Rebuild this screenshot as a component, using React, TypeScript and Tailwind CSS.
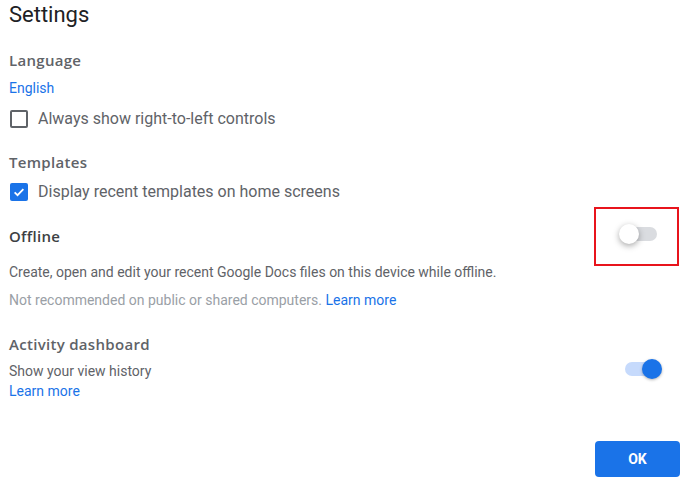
import React from 'react';

function Toggle({ on }: { on: boolean }) {
  return (
    <div className="relative w-[34px] h-[14px]">
      <div className={on ? 'w-full h-full rounded-full bg-[#c6dafc]' : 'w-full h-full rounded-full bg-[#dadce0]'} />
      <div
        className={
          on
            ? 'absolute top-[-3px] right-[-3px] w-[20px] h-[20px] rounded-full bg-[#1a73e8] shadow-[0_1px_3px_rgba(0,0,0,0.3)]'
            : 'absolute top-[-3px] left-[-4px] w-[20px] h-[20px] rounded-full bg-white shadow-[0_2px_6px_rgba(0,0,0,0.35)]'
        }
      />
    </div>
  );
}

function Checkbox({ checked }: { checked: boolean }) {
  return checked ? (
    <div className="w-[18px] h-[18px] rounded-[2px] bg-[#1a73e8] flex items-center justify-center">
      <svg width="14" height="14" viewBox="0 0 24 24" fill="none" stroke="white" strokeWidth="3">
        <path d="M4.5 12.5l5 5L19.5 7" />
      </svg>
    </div>
  ) : (
    <div className="w-[18px] h-[18px] rounded-[2px] border-2 border-[#5f6368]" />
  );
}

const heading = "font-['Open_Sans',sans-serif] text-[15px] leading-[20px] font-semibold tracking-[0.3px]";

export default function App() {
  return (
    <div className="relative w-[689px] h-[489px] bg-white font-['Roboto',sans-serif] pl-[9px] pr-[9px]">
      <h1 className="pt-[1px] text-[22px] leading-[28px] text-[#202124]">Settings</h1>

      <p className={`mt-[21px] ${heading} text-[#5f6368]`}>Language</p>
      <p className="mt-[8px] text-[14px] leading-[20px] text-[#1a73e8]">English</p>
      <div className="mt-[9px] flex items-center gap-[10px] pl-[1px]">
        <Checkbox checked={false} />
        <span className="text-[16px] leading-[24px] text-[#5f6368]">Always show right-to-left controls</span>
      </div>

      <p className={`mt-[21px] ${heading} text-[#5f6368]`}>Templates</p>
      <div className="mt-[8px] flex items-center gap-[10px] pl-[1px]">
        <Checkbox checked={true} />
        <span className="text-[16px] leading-[24px] text-[#5f6368]">Display recent templates on home screens</span>
      </div>

      <div className="relative mt-[22px] flex items-center justify-between">
        <p className={`${heading} text-[#3c4043]`}>Offline</p>
        <div className="mr-[23px] mt-[-4px]">
          <Toggle on={false} />
        </div>
        <div className="absolute right-[1px] top-[-19px] w-[85px] h-[59px] border-2 border-[#e8141c]" />
      </div>
      <p className="mt-[16px] text-[14px] leading-[20px] text-[#5f6368]">
        Create, open and edit your recent Google Docs files on this device while offline.
      </p>
      <p className="mt-[8px] text-[14px] leading-[20px] text-[#9aa0a6]">
        Not recommended on public or shared computers. <span className="text-[#1a73e8]">Learn more</span>
      </p>

      <div className="mt-[24px] flex justify-between">
        <div>
          <p className={`${heading} text-[#5f6368]`}>Activity dashboard</p>
          <p className="mt-[7px] text-[14px] leading-[20px] text-[#5f6368]">Show your view history</p>
          <p className="text-[14px] leading-[20px] text-[#1a73e8]">Learn more</p>
        </div>
        <div className="mt-[28px] mr-[21px]">
          <Toggle on={true} />
        </div>
      </div>

      <div className="mt-[40px] flex justify-end">
        <button className="w-[85px] h-[36px] rounded-[4px] bg-[#1a73e8] text-white text-[14px] font-bold">OK</button>
      </div>
    </div>
  );
}
